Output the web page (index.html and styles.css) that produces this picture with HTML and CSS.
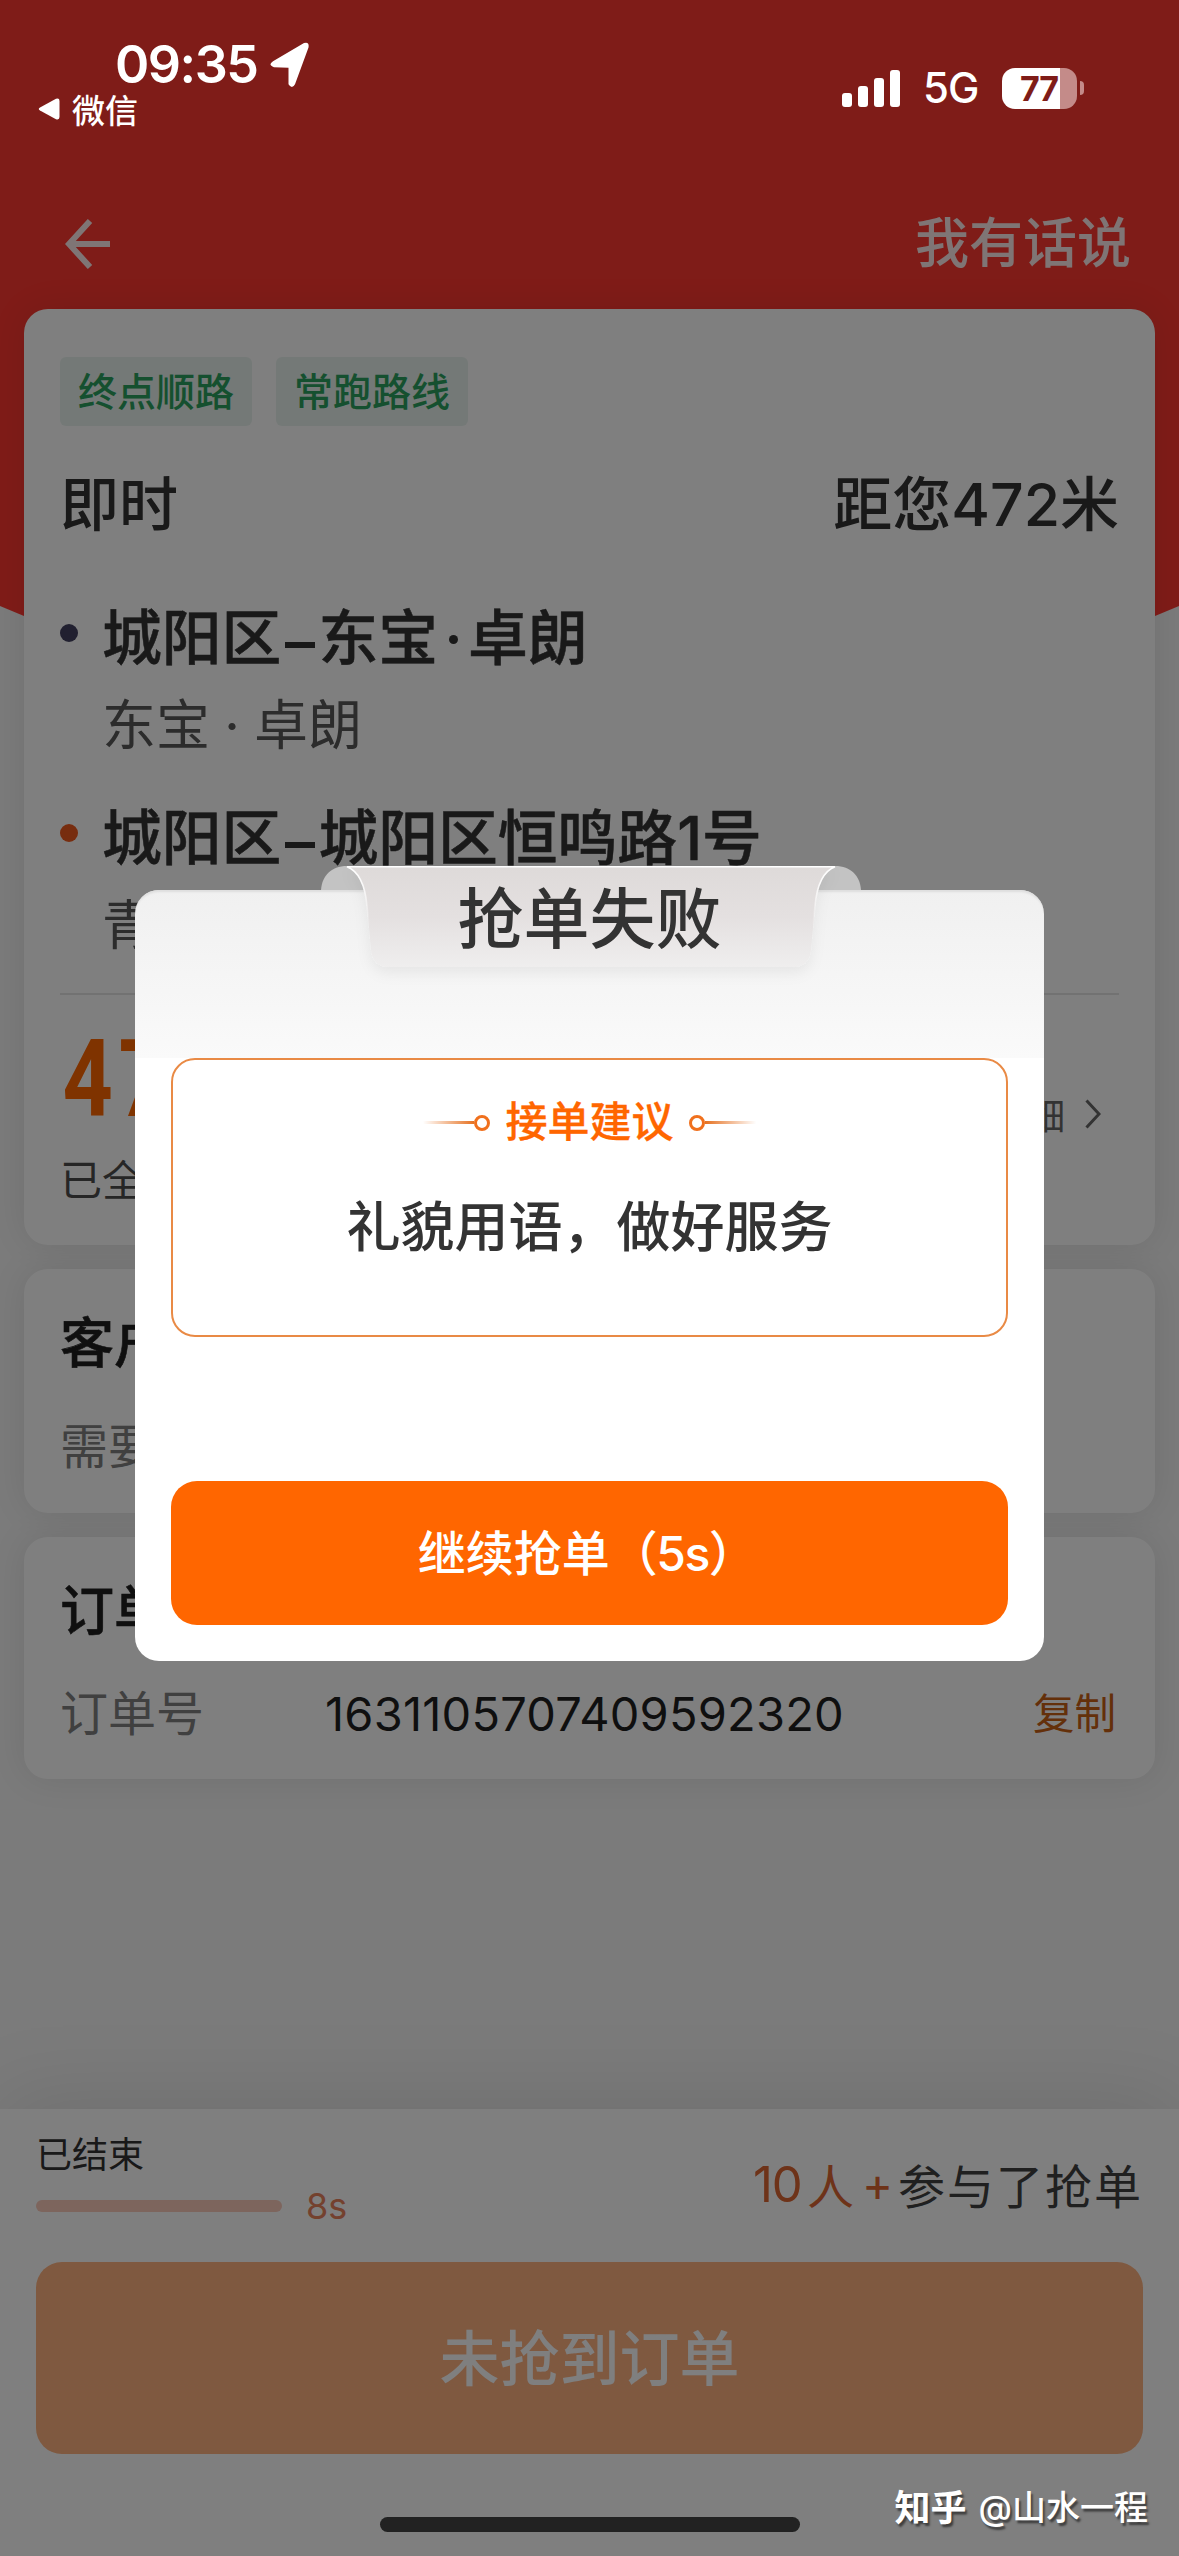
FILE: index.html
```html
<!DOCTYPE html>
<html lang="zh-CN">
<head>
<meta charset="utf-8">
<title>抢单失败</title>
<link rel="stylesheet" href="styles.css">
</head>
<body>
<div class="screen">
  <header class="status">
    <div class="status-left">
      <div class="clock">
        <span class="time">09:35</span>
        <svg class="location" width="40" height="46" viewBox="0 0 40 42" preserveAspectRatio="none"><path d="M3 17.500L34 1Q39.500-.5 38.500 5L25 38.500Q22 43.500 18.500 38.500L18.500 23.500L4 23Q-2.500 21 3 17.500Z" fill="#fff"/></svg>
      </div>
      <div class="return">
        <svg width="22" height="22" viewBox="0 0 22 22"><path d="M2 9.500L18 .8Q21.500-.2 21.500 3V19Q21.500 22.200 18 21.200L2 12.500Q-.5 11 2 9.500Z" fill="#fff"/></svg>
        <span>微信</span>
      </div>
    </div>
    <div class="status-right">
      <svg width="58" height="38" viewBox="0 0 58 38" fill="#fff"><rect x="0" y="24" width="10" height="14" rx="3"/><rect x="16" y="17" width="10" height="21" rx="3"/><rect x="32" y="9" width="10" height="29" rx="3"/><rect x="48" y="1" width="10" height="37" rx="3"/></svg>
      <span class="network">5G</span>
      <span class="battery"><span class="battery-body">77</span><span class="battery-cap"></span></span>
    </div>
  </header>

  <nav class="nav">
    <svg width="46" height="50" viewBox="0 0 46 50" fill="none" stroke="#fff" stroke-width="6"><path d="M25 2L4 25L25 48M4 25H45"/></svg>
    <span>我有话说</span>
  </nav>

  <main class="cards">
    <section class="card trip">
      <div class="tags"><span class="tag">终点顺路</span><span class="tag">常跑路线</span></div>
      <div class="headline"><span>即时</span><span>距您472米</span></div>
      <div class="stop">
        <i class="dot"></i>
        <div><h2>城阳区<b class="dash"></b>东宝<b class="mid"></b>卓朗</h2><p>东宝 · 卓朗</p></div>
      </div>
      <div class="stop">
        <i class="dot dot-end"></i>
        <div><h2>城阳区<b class="dash"></b>城阳区恒鸣路1号</h2><p>青</p></div>
      </div>
      <div class="fare">
        <div><div class="price">47</div><div class="paid">已全</div></div>
        <div class="detail"><span>明细</span><svg width="16" height="30" viewBox="0 0 16 30" fill="none" stroke="#666" stroke-width="3"><path d="M1.500 1.500L14 15L1.500 28.500"/></svg></div>
      </div>
    </section>
    <section class="card info needs"><h3>客户</h3><p>需要</p></section>
    <section class="card info order">
      <h3>订单</h3>
      <div class="order-row"><span class="label">订单号</span><span class="number">1631105707409592320</span><span class="copy">复制</span></div>
    </section>
  </main>

  <footer class="footer">
    <div class="progress-row">
      <div>
        <div class="ended">已结束</div>
        <div class="progress"><span class="bar"></span><span class="seconds">8s</span></div>
      </div>
      <div class="people"><em><span class="ten">10</span>人<span class="plus">+</span></em>参与了抢单</div>
    </div>
    <div class="missed">未抢到订单</div>
  </footer>

  <div class="shade"></div>
  <div class="home"></div>
  <div class="watermark"><b>知乎</b><span>@山水一程</span></div>

  <div class="modal">
    <svg class="ribbon" width="540" height="132" viewBox="0 0 540 132">
      <defs>
        <linearGradient id="ribbonFill" x1="0" y1="0" x2="0" y2="1"><stop offset="0" stop-color="#dedad9"/><stop offset=".5" stop-color="#e4e0e0"/><stop offset="1" stop-color="#efeeee"/></linearGradient>
        <linearGradient id="ribbonEdge" gradientUnits="userSpaceOnUse" x1="0" y1="0" x2="0" y2="60"><stop offset="0" stop-color="#fff"/><stop offset=".4" stop-color="#f8f7f7"/><stop offset="1" stop-color="#f8f7f7" stop-opacity="0"/></linearGradient>
        <filter id="ribbonShadow" x="-10%" y="-10%" width="120%" height="150%"><feDropShadow dx="0" dy="6" stdDeviation="7" flood-color="#000" flood-opacity=".06"/></filter>
      </defs>
      <path d="M0 24C1 10 10 0 26 0H514C530 0 539 10 540 24Z" fill="#c3c3c3"/>
      <path d="M26 0H514C503 5 496 18 494 40L490 84Q488 101 472 101H68Q52 101 50 84L46 40C44 18 37 5 26 0Z" fill="url(#ribbonFill)" filter="url(#ribbonShadow)"/>
      <path d="M48 60L46 40C44 18 37 5 26 .8H514C503 5 496 18 494 40L492 60" fill="none" stroke="url(#ribbonEdge)" stroke-width="1.600"/>
    </svg>
    <h1>抢单失败</h1>
    <div class="advice">
      <div class="advice-title">
        <span class="mark"></span><span>接单建议</span><span class="mark mark-right"></span>
      </div>
      <p>礼貌用语，做好服务</p>
    </div>
    <div class="continue">继续抢单<span class="count">（5s）</span></div>
  </div>
</div>
</body>
</html>
```
FILE: styles.css
```css
*, *::before, *::after { box-sizing: border-box; margin: 0; padding: 0; }
body { font-family: Inter, "Noto Sans CJK SC", sans-serif; font-weight: 400; }
svg { display: block; flex: none; }

.screen {
  position: relative;
  width: 1179px;
  height: 2556px;
  overflow: hidden;
  display: flex;
  flex-direction: column;
  background: linear-gradient(#ff3830 0 600px, #f6f6f6 600px);
}
.screen::before {
  content: "";
  position: absolute;
  inset: 0 0 auto;
  height: 640px;
  background: #ff3830;
  clip-path: polygon(0 0, 100% 0, 100% 606px, 1155px 616px, 24px 616px, 0 606px);
}

/* Status bar */
.status {
  position: relative;
  z-index: 3;
  height: 180px;
  display: flex;
  justify-content: space-between;
  color: #fff;
}
.status-left { padding: 39px 0 0 38px; }
.clock { display: flex; align-items: center; height: 52px; padding-left: 77px; gap: 12px; }
.time { width: 143px; font-size: 52px; font-weight: 600; line-height: 54px; letter-spacing: -1.500px; white-space: nowrap; }
.return { display: flex; align-items: center; gap: 12px; height: 38px; margin-top: -1px; font-size: 33px; font-weight: 500; }
.status-right { display: flex; align-items: center; height: 46px; margin: 65px 95px 0 0; }
.network { width: 77px; padding-left: 23px; font-size: 42px; font-weight: 500; line-height: 48px; letter-spacing: -1px; white-space: nowrap; }
.battery { display: flex; align-items: center; gap: 3px; margin-left: 25px; }
.battery-body {
  width: 75px; height: 41px;
  border-radius: 13px;
  background: linear-gradient(90deg, #fff 58px, #c48b89 58px);
  color: #7f1c18;
  font-size: 34px; font-weight: 700; line-height: 42px;
  padding-right: 1px;
  text-align: center;
  letter-spacing: -1px;
}
.battery-cap { width: 4px; height: 14px; border-radius: 0 6px 6px 0; background: #c48b89; }

/* Navigation */
.nav {
  position: relative;
  height: 129px;
  padding: 0 48px 2px 65px;
  display: flex;
  justify-content: space-between;
  align-items: center;
  color: #fff;
  font-size: 54px;
  font-weight: 500;
  line-height: 60px;
}
.nav > * { opacity: .9; }

/* Cards */
.cards { position: relative; flex: none; height: 1800px; padding: 0 24px; display: flex; flex-direction: column; gap: 24px; }
.card { border-radius: 24px; background: #fff; padding: 0 36px; box-shadow: 0 0 36px rgba(0, 0, 0, .09); color: #333; }
.trip { height: 936px; padding-top: 48px; }
.tags { display: flex; gap: 24px; }
.tag { height: 69px; padding: 0 18px; border-radius: 6px; background: #e9f3ef; color: #2ba15e; font-size: 39px; font-weight: 500; line-height: 70px; }
.headline { display: flex; justify-content: space-between; height: 76px; margin-top: 41px; font-size: 59px; font-weight: 500; line-height: 76px; }
.stop { display: flex; gap: 24px; height: 200px; margin-top: 48px; }
.stop + .stop { margin-top: 0; }
.dot { flex: none; width: 18px; height: 18px; margin-top: 33px; border-radius: 50%; background: #424060; }
.dot-end { background: #ef5a1f; }
.stop h2 { display: flex; align-items: center; height: 94px; font-size: 59.800px; font-weight: 500; line-height: 94px; white-space: nowrap; -webkit-text-stroke: .5px; }
.dash { width: 30px; height: 6px; margin: 14px 3px 0 4px; background: #333; }
.mid { width: 9px; height: 9px; margin: 2px 10px 0 11px; border-radius: 50%; background: #333; }
.stop p { color: #595959; font-size: 54px; line-height: 82px; word-spacing: -1px; }
.fare { display: flex; justify-content: space-between; height: 250px; margin-top: 2px; border-top: 2px solid #e4e4e4; }
.price { height: 160px; color: #ff6600; font-family: Roboto, sans-serif; font-size: 107px; font-weight: 700; line-height: 169px; transform: scaleX(.82); transform-origin: 0 0; letter-spacing: 7px; padding-left: 3px; }
.paid { font-size: 42px; line-height: 52px; color: #4d4d4d; }
.detail { display: flex; align-items: center; height: 48px; margin-top: 95px; padding-right: 18px; gap: 20px; color: #666; font-size: 36px; }
.info h3 { color: #1f1f1f; font-size: 54px; font-weight: 500; line-height: 60px; -webkit-text-stroke: .6px; }
.needs { height: 244px; padding-top: 45px; }
.needs p { margin-top: 43px; color: #808080; font-size: 48px; line-height: 60px; }
.order { height: 242px; padding-top: 49px; }
.order h3 { line-height: 52px; }
.order-row { display: flex; align-items: center; height: 60px; margin-top: 46px; font-size: 48px; line-height: 60px; }
.label { width: 265px; color: #808080; }
.number { color: #1f1f1f; font-size: 47px; letter-spacing: .200px; }
.copy { margin-left: auto; padding-right: 3px; color: #c96014; font-size: 41.500px; }

/* Bottom panel */
.footer { position: relative; height: 447px; padding: 0 36px; background: #fff; box-shadow: 0 -10px 80px rgba(0, 0, 0, .1); }
.progress-row { display: flex; justify-content: space-between; height: 153px; }
.ended { height: 50px; margin-top: 21px; font-size: 36px; line-height: 50px; color: #333; }
.progress { display: flex; align-items: center; gap: 24px; height: 34px; margin-top: 9px; }
.bar { width: 246px; height: 12px; border-radius: 6px; background: #facaba; }
.seconds { color: #e9825c; font-size: 36px; line-height: 32px; }
.people { display: flex; align-items: center; height: 60px; margin-top: 44px; font-size: 47px; letter-spacing: 2px; color: #404040; }
.people em { display: flex; align-items: center; font-style: normal; color: #dc6633; }
.ten { width: 54px; padding-top: 2px; font-size: 49px; letter-spacing: -1px; }
.plus { margin: 0 5px 0 6px; letter-spacing: 0; }
.missed { height: 192px; border-radius: 26px; background: #ffb280; color: #fff; font-size: 60px; font-weight: 500; line-height: 194px; text-align: center; }

/* Layers above the page */
.shade { position: absolute; inset: 0; z-index: 2; background: rgba(0, 0, 0, .5); }
.home { position: absolute; z-index: 3; left: 380px; top: 2517px; width: 420px; height: 15px; border-radius: 8px; background: #222; }
.watermark { position: absolute; z-index: 3; right: 31px; top: 2480px; display: flex; align-items: center; gap: 12px; height: 50px; color: #fff; font-size: 34px; font-weight: 500; text-shadow: 2px 3px 2px rgba(0, 0, 0, .5); }
.watermark b { font-size: 36px; font-weight: 700; }

/* Result dialog */
.modal {
  position: absolute;
  z-index: 3;
  left: 135px;
  top: 890px;
  width: 909px;
  height: 771px;
  padding: 0 36px;
  border-radius: 24px;
  background: linear-gradient(#f0f0f0, #fafafa 168px, #fff 168px);
  box-shadow: inset 0 3px 2px -1px #dedede;
  color: #333;
}
.ribbon { position: absolute; left: 186px; top: -24px; }
.modal h1 { position: relative; height: 168px; font-size: 66px; font-weight: 500; line-height: 58px; text-align: center; }
.advice { height: 279px; border: 2px solid #e98a45; border-radius: 24px; background: #fff; text-align: center; }
.advice-title { display: flex; justify-content: center; align-items: center; gap: 15px; height: 60px; margin-top: 32px; color: #f60; font-size: 42px; font-weight: 500; line-height: 58px; -webkit-text-stroke: .3px; }
.advice p { margin-top: 41px; font-size: 54px; font-weight: 500; line-height: 70px; }
.mark { display: flex; align-items: center; width: 67px; padding-top: 1px; }
.mark::before { content: ""; flex: 1; height: 3px; background: linear-gradient(90deg, transparent, #e67222); }
.mark::after { content: ""; width: 16px; height: 16px; border: 3px solid #f0701d; border-radius: 50%; }
.mark-right { transform: scaleX(-1); }
.continue { height: 144px; margin-top: 144px; padding-right: 6px; border-radius: 26px; background: #f60; color: #fff; font-size: 48px; font-weight: 500; line-height: 146px; text-align: center; }
.count { letter-spacing: -1.500px; }
```
